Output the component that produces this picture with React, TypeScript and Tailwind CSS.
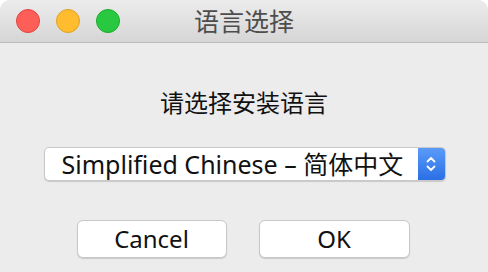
import React from 'react';

const font = { fontFamily: '"Noto Sans", "Noto Sans CJK SC", sans-serif' };

function TrafficLight({ color, border }: { color: string; border: string }) {
  return <div className={`w-[24px] h-[24px] rounded-full border ${color} ${border}`} />;
}

export default function App() {
  return (
    <div className="w-[488px] h-[272px] bg-[#ececec] flex flex-col overflow-hidden rounded-t-[10px]" style={font}>
      <div className="relative h-[43px] shrink-0 flex items-center px-[16px] gap-[16px] bg-gradient-to-b from-[#ececec] to-[#d6d6d6] border-b border-[#bdbdbd]">
        <TrafficLight color="bg-[#fd5f58]" border="border-[#e0443e]" />
        <TrafficLight color="bg-[#febc2e]" border="border-[#dea123]" />
        <TrafficLight color="bg-[#28c840]" border="border-[#1aab29]" />
        <div className="absolute inset-0 flex items-center justify-center pointer-events-none">
          <span className="text-[25px] text-[#4d4d4d] leading-none">语言选择</span>
        </div>
      </div>

      <div className="flex flex-col items-center">
        <div className="mt-[48px] text-[24px] leading-none text-[#111]">请选择安装语言</div>

        <div className="mt-[32px] w-[402px] h-[34px] ml-[1px] flex bg-white rounded-[5px] border border-[#c8c8c8] shadow-[0_1px_1px_rgba(0,0,0,0.15)] overflow-hidden">
          <div className="flex-1 flex items-center pl-[17px] text-[25px] text-[#111] leading-none whitespace-nowrap">
            Simplified Chinese – 简体中文
          </div>
          <div className="w-[27px] flex items-center justify-center bg-gradient-to-b from-[#5a9bf8] to-[#2a6fe6]">
            <svg width="10" height="18" viewBox="0 0 10 18" fill="none" stroke="white" strokeWidth="1.8" strokeLinecap="round" strokeLinejoin="round">
              <path d="M1.5 6.5 L5 3 L8.5 6.5" />
              <path d="M1.5 11.5 L5 15 L8.5 11.5" />
            </svg>
          </div>
        </div>

        <div className="mt-[39px] flex gap-[32px] -ml-[2px]">
          <button className="w-[150px] h-[38px] bg-white rounded-[6px] border border-[#c8c8c8] shadow-[0_1px_1px_rgba(0,0,0,0.15)] text-[24px] text-[#111] leading-none">
            Cancel
          </button>
          <button className="w-[151px] h-[38px] bg-white rounded-[6px] border border-[#c8c8c8] shadow-[0_1px_1px_rgba(0,0,0,0.15)] text-[24px] text-[#111] leading-none">
            OK
          </button>
        </div>
      </div>
    </div>
  );
}
